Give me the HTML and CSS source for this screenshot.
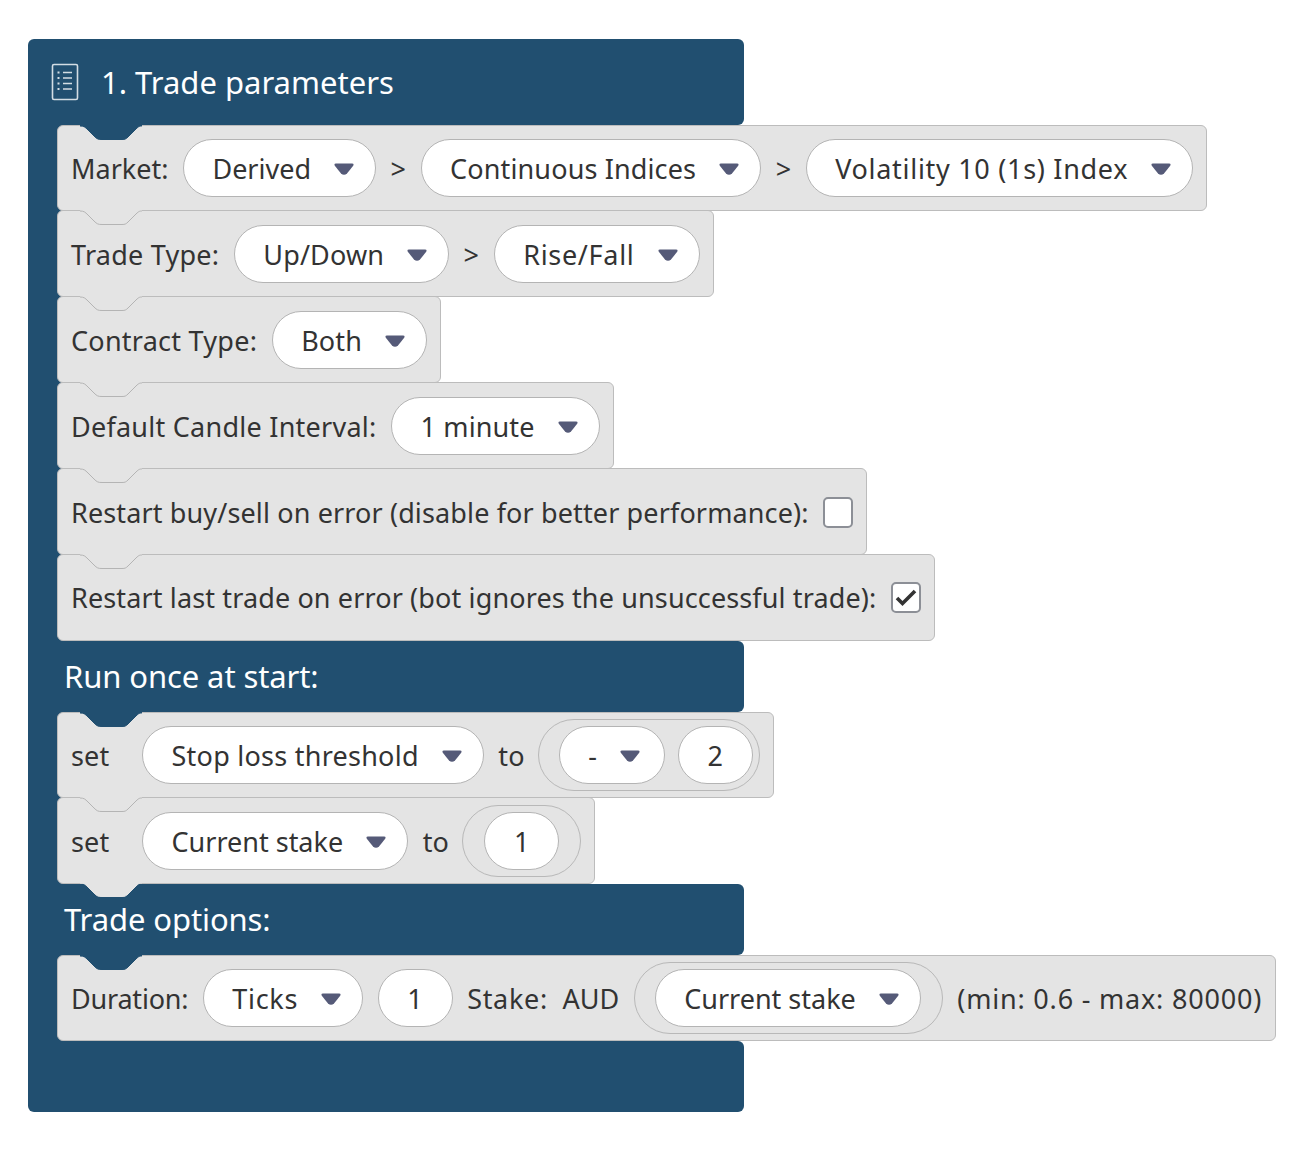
FILE: index.html
```html
<!DOCTYPE html>
<html>
<head>
<title>Trade parameters</title>
<link rel="stylesheet" href="styles.css">
</head>
<body>

<svg class="defs" width="0" height="0">
  <symbol id="caret" viewBox="0 0 20 13">
    <path d="M2 .5H18Q20.500 .5 19 3L13 10.500Q10 13 7 10.500L1 3Q-.5 .5 2 .5Z"/>
  </symbol>
  <symbol id="notch" viewBox="0 0 64 16">
    <path stroke="none" d="M0 0H62V1C60 1 59 1 56 4L48 12C46 14 45 14.500 42 14.500H22C18 14.500 17 14 14 11L8 5C5 2 4 1 0 1Z"/>
    <path fill="none" d="M0 1C4 1 5 2 8 5L14 11C17 14 18 14.500 22 14.500H42C45 14.500 46 14 48 12L56 4C59 1 60 1 62 1"/>
  </symbol>
</svg>

<div class="block">

  <div class="cap cap-top">
    <svg class="list-icon" width="28" height="38" viewBox="0 0 28 38">
      <rect x="1.500" y="1.500" width="25" height="35" rx="1.500"/>
      <path d="M12 9.500H21M12 15H21M12 20.500H21M12 26H21"/>
      <path class="dots" d="M6.500 9.500H8.500M6.500 15H8.500M6.500 20.500H8.500M6.500 26H8.500"/>
    </svg>
    <span>1. Trade parameters</span>
  </div>

  <div class="stack">
    <div class="row">
      <svg class="notch dark"><use href="#notch"/></svg>
      <span class="tight">Market:</span>
      <div class="pill"><span class="tight">Derived</span><svg class="caret"><use href="#caret"/></svg></div>
      <span>&gt;</span>
      <div class="pill"><span>Continuous Indices</span><svg class="caret"><use href="#caret"/></svg></div>
      <span>&gt;</span>
      <div class="pill"><span class="wide">Volatility 10 (1s) Index</span><svg class="caret"><use href="#caret"/></svg></div>
    </div>
    <div class="row">
      <svg class="notch"><use href="#notch"/></svg>
      <span class="mid">Trade Type:</span>
      <div class="pill"><span>Up/Down</span><svg class="caret"><use href="#caret"/></svg></div>
      <span>&gt;</span>
      <div class="pill"><span class="wide">Rise/Fall</span><svg class="caret"><use href="#caret"/></svg></div>
    </div>
    <div class="row">
      <svg class="notch"><use href="#notch"/></svg>
      <span class="mid">Contract Type:</span>
      <div class="pill"><span>Both</span><svg class="caret"><use href="#caret"/></svg></div>
    </div>
    <div class="row">
      <svg class="notch"><use href="#notch"/></svg>
      <span class="mid">Default Candle Interval:</span>
      <div class="pill"><span>1 minute</span><svg class="caret"><use href="#caret"/></svg></div>
    </div>
    <div class="row">
      <svg class="notch"><use href="#notch"/></svg>
      <span>Restart buy/sell on error (disable for better performance):</span>
      <div class="check"></div>
    </div>
    <div class="row row-lift">
      <svg class="notch"><use href="#notch"/></svg>
      <span>Restart last trade on error (bot ignores the unsuccessful trade):</span>
      <div class="check">
        <svg width="26" height="27" viewBox="0 0 26 27"><path d="M4 14L9.500 19.500L22 7"/></svg>
      </div>
    </div>
  </div>

  <div class="cap cap-mid">Run once at start:</div>

  <div class="stack">
    <div class="row">
      <svg class="notch dark"><use href="#notch"/></svg>
      <span class="set">set</span>
      <div class="pill"><span class="mid">Stop loss threshold</span><svg class="caret"><use href="#caret"/></svg></div>
      <span class="to">to</span>
      <div class="slot slot-pair">
        <div class="pill pill-minus"><span>-</span><svg class="caret"><use href="#caret"/></svg></div>
        <div class="pill pill-num">2</div>
      </div>
    </div>
    <div class="row">
      <svg class="notch"><use href="#notch"/></svg>
      <span class="set">set</span>
      <div class="pill"><span class="tight">Current stake</span><svg class="caret"><use href="#caret"/></svg></div>
      <span class="to">to</span>
      <div class="slot slot-num">
        <div class="pill pill-num">1</div>
      </div>
      <svg class="tab"><use href="#notch"/></svg>
    </div>
  </div>

  <div class="cap cap-mid">Trade options:</div>

  <div class="stack">
    <div class="row">
      <svg class="notch dark"><use href="#notch"/></svg>
      <span class="narrow">Duration:</span>
      <div class="pill"><span class="wide">Ticks</span><svg class="caret"><use href="#caret"/></svg></div>
      <div class="pill pill-num">1</div>
      <span class="wide">Stake:</span>
      <span class="tight">AUD</span>
      <div class="slot">
        <div class="pill"><span class="tight">Current stake</span><svg class="caret"><use href="#caret"/></svg></div>
      </div>
      <span class="wider">(min: 0.6 - max: 80000)</span>
    </div>
  </div>

  <div class="cap cap-bottom"></div>

</div>

</body>
</html>
```

FILE: styles.css
```css
body {
    margin: 0;
    padding: 39px 28px 50px;
    background-color: #ffffff;
    color: #333333;
    font-family: "Noto Sans", sans-serif;
    font-size: 27px;
    letter-spacing: 0.13px;
}
.defs {
    position: absolute;
}
.narrow {
    letter-spacing: -0.2px;
}
.tight {
    letter-spacing: 0;
}
.mid {
    letter-spacing: 0.25px;
}
.wide {
    letter-spacing: 0.7px;
}
.wider {
    letter-spacing: 0.8px;
}
.cap {
    width: 716px;
    height: 71px;
    box-sizing: border-box;
    padding-left: 36px;
    display: flex;
    align-items: center;
    background-color: #214f70;
    border-radius: 0 6px 6px 0;
    color: #ffffff;
    font-size: 31px;
    letter-spacing: 0;
}
.cap-mid {
    padding-bottom: 2px;
    letter-spacing: -0.1px;
}
.cap-top {
    height: 86px;
    padding-left: 23px;
    gap: 22px;
    border-radius: 6px 6px 6px 0;
}
.cap-bottom {
    border-radius: 0 6px 6px 6px;
}
.list-icon {
    fill: none;
    stroke: #d3dde4;
    stroke-width: 1.6;
}
.list-icon .dots {
    stroke-width: 2;
}
.stack {
    width: fit-content;
    display: flex;
    flex-direction: column;
    align-items: flex-start;
    border-left: 29px solid #214f70;
    background: linear-gradient(to right, #214f70 8px, transparent 8px);
}
.row {
    position: relative;
    height: 87px;
    box-sizing: border-box;
    margin-top: -1px;
    padding: 1px 13px 0;
    display: flex;
    align-items: center;
    gap: 14.5px;
    background-color: #e4e4e4;
    border: 1px solid #bcbcbc;
    border-radius: 6px;
    white-space: nowrap;
}
.row:first-child {
    margin-top: 0;
    padding-top: 0;
    height: 86px;
}
.row-lift {
    padding-top: 0;
    padding-bottom: 1px;
}
.notch {
    position: absolute;
    left: 22px;
    top: -1px;
    width: 64px;
    height: 16px;
    fill: #e4e4e4;
    stroke: #b4b4b4;
    stroke-width: 1;
}
.notch.dark {
    fill: #214f70;
    stroke: #214f70;
}
.tab {
    position: absolute;
    z-index: 2;
    left: 22px;
    bottom: -15px;
    width: 64px;
    height: 16px;
    fill: #e4e4e4;
    stroke: #e4e4e4;
}
.pill {
    height: 58px;
    box-sizing: border-box;
    padding: 0 21px 0 28.5px;
    display: flex;
    align-items: center;
    gap: 23px;
    background-color: #ffffff;
    border: 1px solid #b4b4b4;
    border-radius: 29px;
}
.pill-num {
    width: 75px;
    padding: 0;
    justify-content: center;
}
.pill-minus {
    width: 106px;
}
.caret {
    width: 20px;
    height: 13px;
    margin-top: 2px;
    fill: #555a78;
}
.set {
    width: 56.5px;
}
.to {
    width: 25px;
}
.slot {
    height: 72px;
    box-sizing: border-box;
    padding: 0 21px 0 20px;
    display: flex;
    align-items: center;
    gap: 13px;
    border: 1px solid #b8b8b8;
    border-radius: 36px;
}
.slot-pair {
    padding-right: 6px;
}
.slot-num {
    padding: 0 21px;
}
.check {
    width: 30px;
    height: 31px;
    box-sizing: border-box;
    background-color: #ffffff;
    border: 2px solid #8c8f96;
    border-radius: 5px;
}
.check svg {
    display: block;
    fill: none;
    stroke: #333333;
    stroke-width: 3.6;
}
```
